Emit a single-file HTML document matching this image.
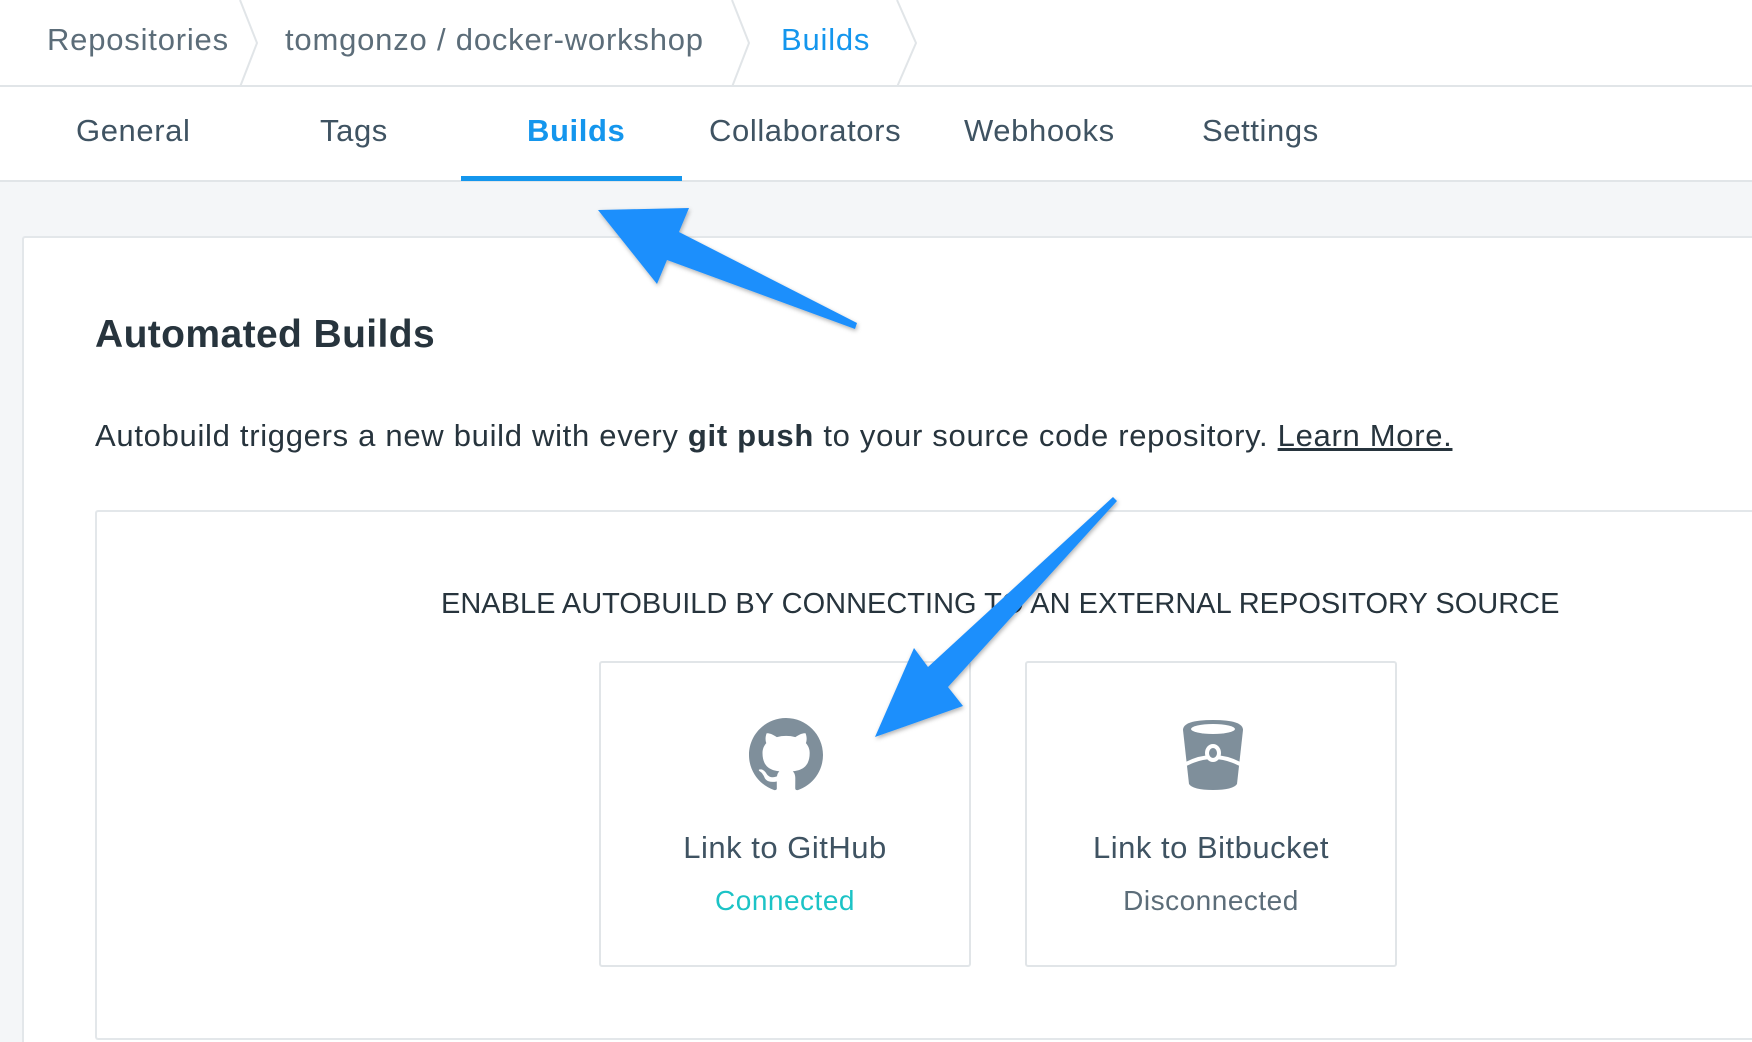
<!DOCTYPE html>
<html style="overflow:hidden;height:1042px"><head><meta charset="utf-8"><style>
*{margin:0;padding:0;box-sizing:border-box}
body{width:1752px;height:1042px;overflow:hidden;background:#f4f6f8;font-family:"Liberation Sans",sans-serif;color:#33444f;position:relative}
.bc{position:absolute;left:0;top:0;width:1752px;height:87px;background:#fff;border-bottom:2px solid #e1e5e8}
.bc span{position:absolute;top:22px;font-size:31px;color:#5c6d79;white-space:nowrap;letter-spacing:0.8px}
.tabs{position:absolute;left:0;top:87px;width:1752px;height:95px;background:#fff;border-bottom:2px solid #e1e5e8}
.tabs span{position:absolute;top:26px;font-size:31px;color:#3f5362;white-space:nowrap;letter-spacing:0.6px}
.ul{position:absolute;left:461px;top:176px;width:221px;height:5px;background:#1496ed}
.card{position:absolute;left:22px;top:236px;width:1730px;height:806px;background:#fff;border:2px solid #e3e7ea;border-right:none;border-bottom:none;border-radius:3px 0 0 0}
h1{position:absolute;left:95px;top:313px;font-size:39px;font-weight:bold;color:#27343d;white-space:nowrap;letter-spacing:0.4px}
p.d{position:absolute;left:95px;top:418px;font-size:31px;color:#27343d;white-space:nowrap;letter-spacing:0.7px}
.box{position:absolute;left:95px;top:510px;width:1657px;height:530px;border:2px solid #e3e7ea;border-right:none;border-radius:3px 0 0 3px;background:#fff}
.cap{position:absolute;left:441px;top:588px;font-size:29px;color:#27343d;white-space:nowrap;letter-spacing:0px}
.tile{position:absolute;top:661px;width:372px;height:306px;border:2px solid #e1e5e8;border-radius:3px;background:#fff;text-align:center}
.tile .t{position:absolute;left:0;right:0;top:167px;font-size:31px;color:#3f5362;letter-spacing:0.5px}
.tile .s{position:absolute;left:0;right:0;top:222px;font-size:28px;letter-spacing:0.5px}
</style></head><body>
<div class="bc">
<span style="left:47px">Repositories</span>
<span style="left:285px">tomgonzo / docker-workshop</span>
<span style="left:781px;color:#1496ed">Builds</span>
<svg width="1752" height="87" style="position:absolute;left:0;top:0">
<polyline points="240,0 257,43 240,87" fill="none" stroke="#e1e5e8" stroke-width="2"/>
<polyline points="732,0 749,43 732,87" fill="none" stroke="#e1e5e8" stroke-width="2"/>
<polyline points="897,0 916,43 897,87" fill="none" stroke="#e1e5e8" stroke-width="2"/>
</svg>
</div>
<div class="tabs">
<span style="left:76px">General</span>
<span style="left:320px">Tags</span>
<span style="left:527px;color:#1496ed;font-weight:bold">Builds</span>
<span style="left:709px">Collaborators</span>
<span style="left:964px">Webhooks</span>
<span style="left:1202px">Settings</span>
</div>
<div class="ul"></div>
<div class="card"></div>
<h1>Automated Builds</h1>
<p class="d">Autobuild triggers a new build with every <b>git push</b> to your source code repository. <u>Learn More.</u></p>
<div class="box"></div>
<div class="cap">ENABLE AUTOBUILD BY CONNECTING TO AN EXTERNAL REPOSITORY SOURCE</div>
<div class="tile" style="left:599px">
<svg width="74" height="74" viewBox="0 0 16 16" style="position:absolute;left:148px;top:55px"><path fill="#7f8f9b" d="M8 0C3.58 0 0 3.58 0 8c0 3.54 2.29 6.53 5.470 7.59.4.07.55-.17.55-.38 0-.19-.01-.82-.01-1.49-2.01.37-2.530-.49-2.690-.94-.09-.23-.48-.94-.82-1.130-.28-.15-.68-.52-.01-.53.63-.01 1.08.58 1.23.82.72 1.21 1.87.87 2.33.66.07-.52.28-.87.51-1.07-1.78-.2-3.640-.89-3.640-3.950 0-.87.31-1.59.82-2.150-.08-.2-.36-1.02.08-2.12 0 0 .67-.21 2.2.82.64-.18 1.32-.27 2-.27.68 0 1.36.09 2 .27 1.53-1.04 2.2-.82 2.2-.82.44 1.1.16 1.92.08 2.12.51.56.82 1.27.82 2.15 0 3.07-1.87 3.75-3.65 3.95.29.25.54.73.54 1.48 0 1.07-.01 1.93-.01 2.2 0 .21.15.46.55.38A8.013 8.013 0 0 0 16 8c0-4.42-3.58-8-8-8z"/></svg>
<div class="t">Link to GitHub</div>
<div class="s" style="color:#1cc3c6">Connected</div>
</div>
<div class="tile" style="left:1025px">
<svg width="64" height="74" viewBox="0 0 64 74" style="position:absolute;left:154px;top:55px">
<path fill="#7f8f9b" d="M2 12 Q2 2 32 2 Q62 2 62 12 L56 66 Q52 72 32 72 Q12 72 8 66 Z"/>
<ellipse cx="32" cy="11" rx="22" ry="5" fill="#fff"/>
<path d="M5 46 Q32 32 59 46" stroke="#fff" stroke-width="4" fill="none"/>
<ellipse cx="32" cy="35" rx="8" ry="9" fill="#fff"/>
<ellipse cx="32" cy="35" rx="4" ry="5" fill="#7f8f9b"/>
</svg>
<div class="t">Link to Bitbucket</div>
<div class="s" style="color:#5c6d79">Disconnected</div>
</div>
<svg width="1752" height="1042" style="position:absolute;left:0;top:0">
<defs><filter id="sh"><feDropShadow dx="1" dy="2" stdDeviation="2" flood-opacity="0.3"/></filter></defs>
<polygon filter="url(#sh)" fill="#1e8ffc" points="598,210 689,208 679,232 857,323 855,329 667,260 657,284"/>
<polygon filter="url(#sh)" fill="#1e8ffc" points="875,737 914,648 928,667 1113,497 1117,501 948,687 963,706"/>
</svg>
</body></html>
